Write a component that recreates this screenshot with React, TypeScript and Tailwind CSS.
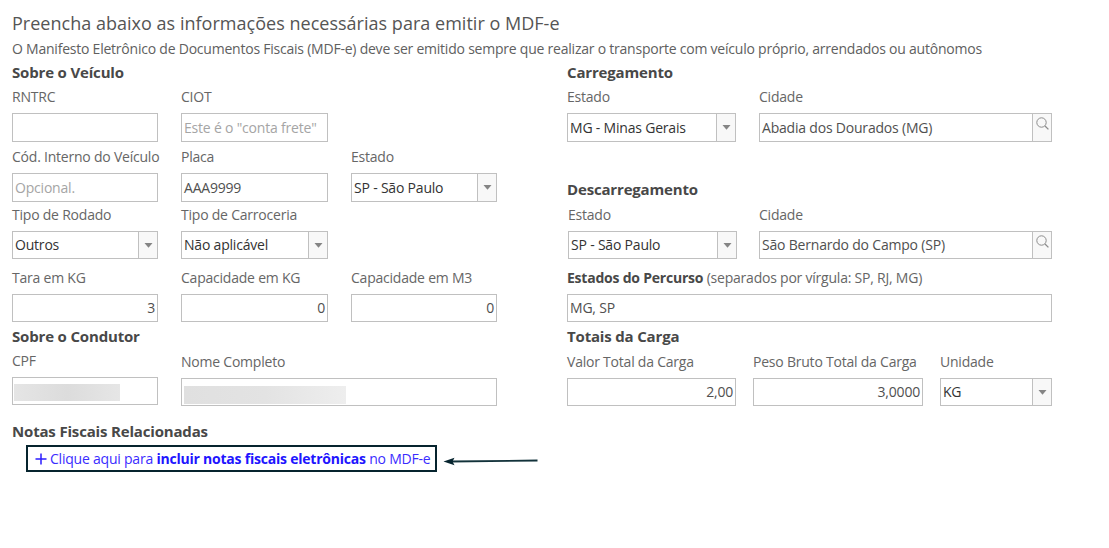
import type { ReactNode } from 'react';

type BoxProps = { className?: string; children?: ReactNode };

function Heading({ className = '', children }: BoxProps) {
  return <h2 className={`h-5 whitespace-nowrap text-[15px] leading-5 font-bold tracking-[-0.17px] text-[#484848] ${className}`}>{children}</h2>;
}

function Label({ className = '', children }: BoxProps) {
  return <div className={`h-5 whitespace-nowrap text-[14px] leading-5 tracking-[-0.22px] text-[#666] ${className}`}>{children}</div>;
}

function Box({ className = '', children }: BoxProps) {
  return (
    <div className={`flex items-center overflow-hidden border border-[#c0c0c0] bg-white px-[2px] text-[14px] leading-5 tracking-[-0.2px] whitespace-nowrap ${className}`}>
      {children}
    </div>
  );
}

function Addon({ children }: BoxProps) {
  return <div className="-mr-[2px] ml-auto flex h-full w-[19px] shrink-0 justify-center border-l border-[#c0c0c0] bg-[#f8f8f8]">{children}</div>;
}

function Select({ className = '', children }: BoxProps) {
  return (
    <Box className={className}>
      <span className="text-[#333]">{children}</span>
      <Addon>
        <svg className="mt-[11px]" width="9" height="5" viewBox="0 0 9 5">
          <path d="M0.5 0H8.5L4.5 4.8Z" fill="#858585" />
        </svg>
      </Addon>
    </Box>
  );
}

function Search({ className = '', children }: BoxProps) {
  return (
    <Box className={className}>
      <span className="text-[#505050]">{children}</span>
      <Addon>
        <svg className="mt-[3px]" width="13" height="13" viewBox="0 0 13 13" fill="none" stroke="#8c8c8c">
          <circle cx="5.5" cy="5.5" r="4.7" />
          <path d="M9 9L12.4 12.4" strokeWidth="1.3" />
        </svg>
      </Addon>
    </Box>
  );
}

export default function App() {
  return (
    <main className="h-[548px] w-[1109px] overflow-hidden bg-white pt-[9px] pl-3 font-['Open_Sans',sans-serif]">
      <h1 className="h-7 text-[18px] leading-7 tracking-[0.02px] whitespace-nowrap text-[#555]">Preencha abaixo as informações necessárias para emitir o MDF-e</h1>
      <p className="mt-[2px] h-5 text-[14px] leading-5 tracking-[-0.225px] whitespace-nowrap text-[#606060]">
        O Manifesto Eletrônico de Documentos Fiscais (MDF-e) deve ser emitido sempre que realizar o transporte com veículo próprio, arrendados ou autônomos
      </p>
      <div className="mt-[3px] flex gap-[70px]">
        <section className="w-[485px]">
          <Heading>Sobre o Veículo</Heading>
          <div className="mt-[5px] grid grid-cols-[146px_147px_146px] gap-x-[23px]">
            <Label>RNTRC</Label>
            <Label className="col-span-2">CIOT</Label>
            <Box className="mt-[6px] h-[29px]" />
            <Box className="mt-[6px] h-[29px] text-[#a5a5a5]">Este é o "conta frete"</Box>
          </div>
          <div className="mt-[5px] grid grid-cols-[146px_147px_146px] gap-x-[23px]">
            <Label>Cód. Interno do Veículo</Label>
            <Label>Placa</Label>
            <Label>Estado</Label>
            <Box className="mt-[6px] h-[29px] text-[#a5a5a5]">Opcional.</Box>
            <Box className="mt-[6px] h-[29px] text-[#505050]">AAA9999</Box>
            <Select className="mt-[6px] h-[29px]">SP - São Paulo</Select>
          </div>
          <div className="mt-[3px] grid grid-cols-[146px_147px] gap-x-[23px]">
            <Label>Tipo de Rodado</Label>
            <Label>Tipo de Carroceria</Label>
            <Select className="mt-[6px] h-7">Outros</Select>
            <Select className="mt-[6px] h-7">Não aplicável</Select>
          </div>
          <div className="mt-[9px] grid grid-cols-[146px_147px_146px] gap-x-[23px]">
            <Label>Tara em KG</Label>
            <Label>Capacidade em KG</Label>
            <Label>Capacidade em M3</Label>
            <Box className="mt-[6px] h-7 justify-end text-[#505050]">3</Box>
            <Box className="mt-[6px] h-7 justify-end text-[#505050]">0</Box>
            <Box className="mt-[6px] h-7 justify-end text-[#505050]">0</Box>
          </div>
          <Heading className="mt-1">Sobre o Condutor</Heading>
          <div className="mt-[5px] grid grid-cols-[146px_316px] gap-x-[23px]">
            <div>
              <Label>CPF</Label>
              <Box className="mt-[6px] h-7">
                <div className="-ml-px h-[17px] w-[106px] shrink-0 translate-y-px bg-linear-to-r from-[#e5e5e5] via-[#dcdcdc] to-[#e6e6e6]" />
              </Box>
            </div>
            <div className="pt-px">
              <Label>Nome Completo</Label>
              <Box className="mt-[6px] h-7">
                <div className="mt-[6px] h-[18px] w-[162px] bg-linear-to-r from-[#e0e0e0] via-[#e3e3e3] to-[#eeeeee]" />
              </Box>
            </div>
          </div>
          <Heading className="mt-[15px]">Notas Fiscais Relacionadas</Heading>
          <div className="mt-1 flex items-center pl-[14px]">
            <a className="flex h-[27px] w-[411px] shrink-0 items-center border-2 border-[#06242e] pl-[7px] text-[14px] leading-5 tracking-[-0.22px] whitespace-nowrap text-[#3a2cff]">
              <svg className="mr-[3px] shrink-0" width="12" height="12" viewBox="0 0 12 12" stroke="#2b1cff" strokeWidth="1.5">
                <path d="M6 0.5V11.5M0.5 6H11.5" />
              </svg>
              <span>Clique aqui para <b className="text-[#2114ff]">incluir notas fiscais eletrônicas</b> no MDF-e</span>
            </a>
            <svg className="mt-[6px] ml-[6px] shrink-0" width="96" height="9" viewBox="0 0 96 9">
              <path d="M8 4.5L94.5 3.5" stroke="#12323a" strokeWidth="1.8" />
              <path d="M0.5 4.5L11.5 0.8L9.5 4.5L11.5 8.3Z" fill="#06242e" />
            </svg>
          </div>
        </section>
        <section className="w-[485px]">
          <Heading>Carregamento</Heading>
          <div className="mt-[5px] grid grid-cols-[169px_293px] gap-x-[23px]">
            <Label>Estado</Label>
            <Label>Cidade</Label>
            <Select className="mt-[6px] h-[29px]">MG - Minas Gerais</Select>
            <Search className="mt-[6px] h-[29px]">Abadia dos Dourados (MG)</Search>
          </div>
          <Heading className="mt-[37px]">Descarregamento</Heading>
          <div className="mt-[6px] grid grid-cols-[169px_293px] gap-x-[22px] pl-px">
            <Label>Estado</Label>
            <Label>Cidade</Label>
            <Select className="mt-[6px] h-7">SP - São Paulo</Select>
            <Search className="mt-[6px] h-7">São Bernardo do Campo (SP)</Search>
          </div>
          <Label className="mt-[9px]"><b className="text-[#484848]">Estados do Percurso</b> (separados por vírgula: SP, RJ, MG)</Label>
          <Box className="mt-[6px] h-7 text-[#505050]">MG, SP</Box>
          <Heading className="mt-1">Totais da Carga</Heading>
          <div className="mt-[6px] grid grid-cols-[169px_170px_112px] gap-x-[17px]">
            <Label>Valor Total da Carga</Label>
            <Label>Peso Bruto Total da Carga</Label>
            <Label>Unidade</Label>
            <Box className="mt-[6px] h-7 justify-end text-[#505050]">2,00</Box>
            <Box className="mt-[6px] h-7 justify-end text-[#505050]">3,0000</Box>
            <Select className="mt-[6px] h-7">KG</Select>
          </div>
        </section>
      </div>
    </main>
  );
}
